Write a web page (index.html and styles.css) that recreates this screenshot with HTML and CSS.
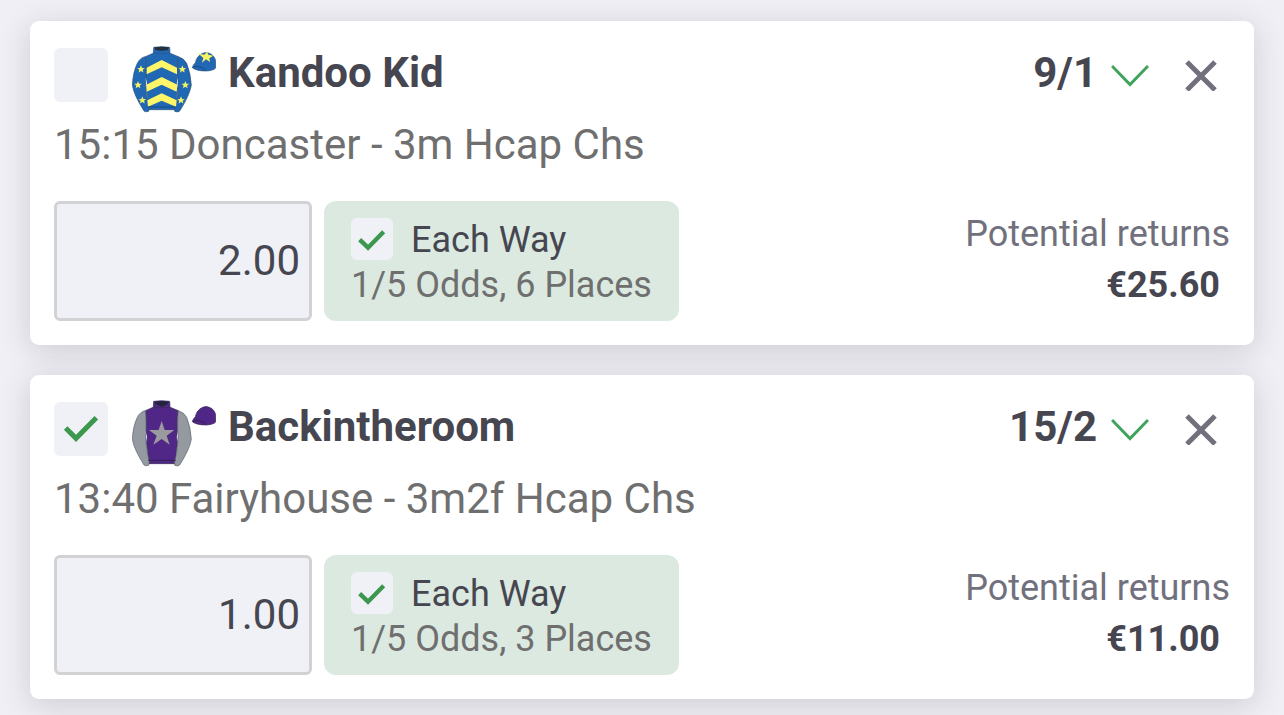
FILE: index.html
```html
<!DOCTYPE html>
<html lang="en">
<head>
<meta charset="utf-8">
<meta name="viewport" content="width=device-width, initial-scale=1">
<title>Bet slip</title>
<link rel="stylesheet" href="styles.css">
</head>
<body>
<svg class="defs" aria-hidden="true">
  <defs>
    <path id="star" d="M0-12 3.2-4 11.5-3.6 5.2 1.6 7 9.8 0 5.2-7 9.8-5.2 1.6-11.5-3.6-3.2-4Z"/>
    <path id="body" d="M101 51 76 62Q79 90 77 122Q77 150 83 184L84 221H167L169 184Q175 150 173 122Q171 90 175 62L149 51 146 48H103Z"/>
    <path id="sleeve-left" d="M76 62Q60 65 52 82Q39 108 37 148Q42 178 72 225Q75 229 86 226L88 214Q78 182 77 145Q80 90 76 62Z"/>
    <path id="sleeve-right" d="M175 62Q191 66 200 82Q212 112 214 148Q208 180 179 225Q174 230 164 226L164 214Q174 182 174 145Q171 90 175 62Z"/>
    <path id="collar" d="M101 34Q125 30 149 34L150 50Q138 56 125 52Q112 56 100 50Z"/>
    <path id="cap" d="M217 95Q218 88 226 80Q230 60 248 52Q258 47 268 52Q284 58 287 76V96Q280 104 258 105Q230 105 217 95Z"/>
  </defs>
</svg>
<main class="slip">
  <article class="card">
    <header class="head">
      <label class="tick tick-large">
        <input type="checkbox" aria-label="Select Kandoo Kid">
        <svg viewBox="0 0 162 162" aria-hidden="true"><path d="M35 78 66 109 127 47"/></svg>
      </label>
      <svg class="silk" viewBox="36 27 252 204" role="img" aria-label="Blue silks with yellow chevrons and stars">
        <g fill="#2168b4" stroke="#2d5078" stroke-width="2">
          <use href="#body"/><use href="#sleeve-left"/><use href="#sleeve-right"/><use href="#collar"/><use href="#cap"/>
        </g>
        <path fill="#25303d" d="M104 34Q125 31 146 34L144 42Q125 46 106 42Z"/>
        <path fill="#fff568" d="M80 95 125 72 171 95V115L125 94 80 115ZM79 146 125 123 172 146 170 167 125 146 80 167ZM82 193 125 172 170 193 168 212 125 194 84 212Z"/>
        <path fill="#fff" d="M77 124Q83 140 79 156ZM174 124Q168 140 172 156Z"/>
        <g fill="#f4f364">
          <use href="#star" x="63" y="100"/><use href="#star" x="54" y="147"/><use href="#star" x="67" y="193"/>
          <use href="#star" x="187" y="100"/><use href="#star" x="196" y="147"/><use href="#star" x="183" y="193"/>
          <path d="M236 53 253 56 261 47 265 56 280 59 268 67 270 78 258 70 246 80 250 66Z"/>
        </g>
        <path fill="none" stroke="#194b83" stroke-width="3" d="M84 213H167M218 94Q240 86 257 102"/>
      </svg>
      <h2 class="name">Kandoo Kid</h2>
      <span class="odds">9/1</span>
      <button class="icon-button" type="button" aria-label="Odds options">
        <svg class="chevron" viewBox="0 0 38 32" aria-hidden="true"><path d="M1 7 19 25.5 37 7"/></svg>
      </button>
      <button class="icon-button remove" type="button" aria-label="Remove Kandoo Kid">
        <svg class="cross" viewBox="0 0 32 32" aria-hidden="true"><path d="M2 3 30 31M30 3 2 31"/></svg>
      </button>
    </header>
    <p class="race">15:15 Doncaster - 3m Hcap Chs</p>
    <div class="bet">
      <input class="stake" type="text" inputmode="decimal" value="2.00" aria-label="Stake on Kandoo Kid">
      <label class="each-way">
        <span class="tick tick-small">
          <input type="checkbox" checked>
          <svg viewBox="0 0 126 126" aria-hidden="true"><path d="M26 65 51 89 98 41"/></svg>
        </span>
        <span class="each-way-name">Each Way</span>
        <span class="terms">1/5 Odds, 6 Places</span>
      </label>
      <div class="returns">
        <span>Potential returns</span>
        <strong class="amount">€25.60</strong>
      </div>
    </div>
  </article>

  <article class="card">
    <header class="head">
      <label class="tick tick-large">
        <input type="checkbox" checked aria-label="Select Backintheroom">
        <svg viewBox="0 0 162 162" aria-hidden="true"><path d="M35 78 66 109 127 47"/></svg>
      </label>
      <svg class="silk" viewBox="36 27 252 204" role="img" aria-label="Purple silks with grey star and sleeves">
        <g fill="#502786" stroke="#35294f" stroke-width="2">
          <use href="#body"/><use href="#collar"/><use href="#cap"/>
        </g>
        <g fill="#949a9f" stroke="#56606a" stroke-width="2">
          <use href="#sleeve-left"/><use href="#sleeve-right"/>
        </g>
        <path fill="#20253b" d="M103 36Q125 32 147 36L142 43 125 50 108 43Z"/>
        <path fill="#fff" d="M77 124Q83 140 79 156ZM174 124Q168 140 172 156Z"/>
        <path fill="#9b9b9f" d="M125 93 134 120 163 120 140 137 149 164 125 147 100 164 110 137 87 120 116 120Z"/>
        <path fill="none" stroke="#2f2352" stroke-width="3" d="M84 211H167M218 94Q240 86 257 102"/>
      </svg>
      <h2 class="name">Backintheroom</h2>
      <span class="odds">15/2</span>
      <button class="icon-button" type="button" aria-label="Odds options">
        <svg class="chevron" viewBox="0 0 38 32" aria-hidden="true"><path d="M1 7 19 25.5 37 7"/></svg>
      </button>
      <button class="icon-button remove" type="button" aria-label="Remove Backintheroom">
        <svg class="cross" viewBox="0 0 32 32" aria-hidden="true"><path d="M2 3 30 31M30 3 2 31"/></svg>
      </button>
    </header>
    <p class="race">13:40 Fairyhouse - 3m2f Hcap Chs</p>
    <div class="bet">
      <input class="stake" type="text" inputmode="decimal" value="1.00" aria-label="Stake on Backintheroom">
      <label class="each-way">
        <span class="tick tick-small">
          <input type="checkbox" checked>
          <svg viewBox="0 0 126 126" aria-hidden="true"><path d="M26 65 51 89 98 41"/></svg>
        </span>
        <span class="each-way-name">Each Way</span>
        <span class="terms">1/5 Odds, 3 Places</span>
      </label>
      <div class="returns">
        <span>Potential returns</span>
        <strong class="amount">€11.00</strong>
      </div>
    </div>
  </article>
</main>
</body>
</html>
```

FILE: styles.css
```css
* {
  box-sizing: border-box;
}

body {
  margin: 0;
  background: #f0eff5;
  color: #464651;
  font-family: Roboto, "Liberation Sans", sans-serif;
  font-size: 42px;
}

.defs {
  position: absolute;
  width: 0;
  height: 0;
}

.slip {
  display: flex;
  flex-direction: column;
  gap: 30px;
  padding: 21px 30px 16px;
}

.card {
  padding: 24px;
  border-radius: 9px;
  background: #fff;
  box-shadow: 0 6px 30px rgba(50, 50, 65, 0.18);
}

.head {
  display: flex;
  align-items: flex-start;
  min-height: 76px;
}

.tick {
  display: grid;
  flex: none;
}

.tick-large {
  width: 54px;
  height: 54px;
  margin: 3px 24px 0 0;
}

.tick-small {
  width: 42px;
  height: 42px;
}

.tick input,
.tick svg {
  grid-area: 1 / 1;
  width: 100%;
  height: 100%;
  margin: 0;
}

.tick input {
  appearance: none;
  border-radius: 6px;
  background: #f0f1f6;
}

.tick svg {
  visibility: hidden;
  fill: none;
  stroke: #3c974f;
  stroke-width: 15;
  pointer-events: none;
}

.tick-small svg {
  stroke-width: 13;
}

.tick input:checked + svg {
  visibility: visible;
}

.silk {
  flex: none;
  width: 84px;
  height: 68px;
}

.name {
  flex: 1;
  margin: 0 0 0 12px;
  font-size: 42px;
  font-weight: 700;
  line-height: 56px;
}

.odds {
  margin-right: 14px;
  font-weight: 700;
  line-height: 56px;
}

.icon-button {
  display: flex;
  align-items: center;
  height: 60px;
  padding: 0;
  border: 0;
  background: none;
}

.remove {
  margin: 0 13px 0 36px;
}

.icon-button svg {
  fill: none;
}

.chevron {
  width: 38px;
  height: 32px;
  stroke: #3fa35c;
  stroke-width: 3;
}

.cross {
  width: 32px;
  height: 32px;
  stroke: #71717d;
  stroke-width: 5;
}

.race {
  margin: 0 0 32px;
  color: #6f6f70;
  line-height: 48px;
}

.bet {
  display: flex;
  gap: 12px;
}

.stake {
  width: 258px;
  height: 120px;
  padding: 0 9px 2px;
  border: 3px solid #d2d2d4;
  border-radius: 6px;
  background: #f0f1f6;
  color: inherit;
  font: inherit;
  text-align: right;
}

.each-way {
  display: grid;
  grid-template-columns: 42px auto;
  column-gap: 18px;
  align-content: start;
  padding: 17px 27px 0;
  border-radius: 12px;
  background: #dce9e0;
  font-size: 36px;
}

.each-way-name {
  line-height: 44px;
}

.terms {
  grid-column: 1 / -1;
  color: #6f6f70;
  line-height: 46px;
}

.returns {
  display: flex;
  flex-direction: column;
  align-items: flex-end;
  margin-left: auto;
  padding-top: 8px;
  color: #71717d;
  font-size: 36px;
  line-height: 51px;
}

.amount {
  padding-right: 10px;
  color: #464651;
}
```
